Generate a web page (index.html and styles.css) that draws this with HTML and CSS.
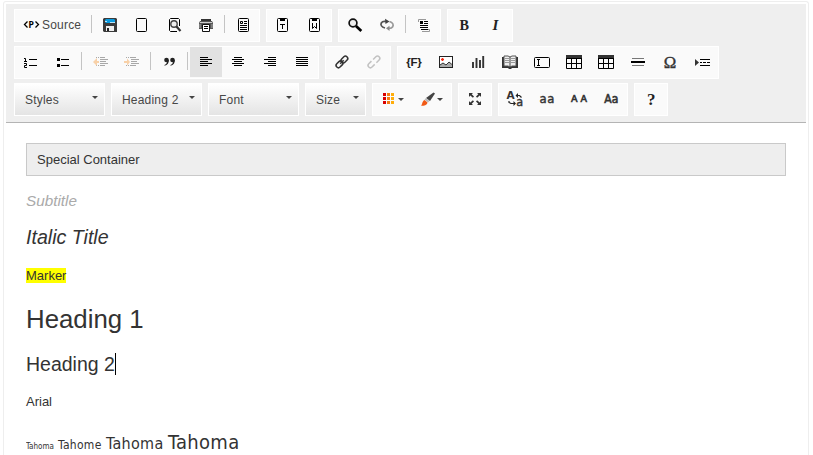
FILE: index.html
```
<!DOCTYPE html>
<html lang="en">
<head>
<meta charset="utf-8">
<title>Editor</title>
<link rel="stylesheet" href="styles.css">
</head>
<body>
<div class="editor">
<div class="toolbar">
<div class="row">
<div class="group">
<button class="btn source"><svg class="src-icon" width="17" height="12"><path class="ln thick" d="M4.500 2.500L1.500 5.500L4.500 8.500M12.500 2.500L15.500 5.500L12.500 8.500"/><text x="5.600" y="9" class="mono" font-size="9">P</text></svg><span>Source</span></button>
<i class="sep"></i>
<button class="btn" aria-label="Save"><svg viewBox="0 0 32 30"><path d="M10 8H22L23 9V22H10L9 21V9Z" fill="#3b3b3b"/><path d="M12 9H20L21 10V12L20 13H12L11 12V10Z" fill="#0a9be0"/><path d="M11 11h2v1h-2zM16 12h5v1h-5z" fill="#b9e4f8"/><path d="M12 16H20V21H12Z" fill="#eee"/><path d="M13 18h2v3h-2z" fill="#222"/></svg></button>
<button class="btn" aria-label="New page"><svg viewBox="0 0 32 30"><rect class="ln" x="10.5" y="8.5" width="10" height="13" rx="1"/></svg></button>
<button class="btn" aria-label="Preview"><svg viewBox="0 0 32 30"><path class="ln" d="M21.500 16V9.500L20.500 8.500H12.500L11.500 9.500V20.500L12.500 21.500H19"/><circle cx="16" cy="14" r="3.200" fill="#eee" stroke="#444" stroke-width="1.400"/><path d="M18.500 16.500L22.500 21" stroke="#333" stroke-width="2.200"/></svg></button>
<button class="btn" aria-label="Print"><svg viewBox="0 0 32 30"><path d="M11 9H21V11H11Z" fill="#333"/><path d="M10 11H22L23 13V19H9V13Z" fill="#555"/><path d="M10 12.500H22" stroke="#ccc"/><path d="M12.500 14.500H19.500V21.500H12.500Z" fill="#fff" stroke="#111"/><path class="ln" d="M14 16.500H18M14 18.500H18"/><path d="M10 14v4M22 14v4" stroke="#aaa"/></svg></button>
<i class="sep"></i>
<button class="btn" aria-label="Templates"><svg viewBox="0 0 32 30"><rect class="ln" x="11.500" y="8.500" width="10" height="13" rx="1"/><path d="M13.500 11.500h2v2h-2z" fill="none" stroke="#000"/><path class="ln" d="M17 11.500H20M17 13.500H20M13 15.500H20M13 17.500H20M13 19.500H20"/></svg></button>
</div>
<div class="group">
<button class="btn" aria-label="Paste as text"><svg viewBox="0 0 32 30"><rect class="ln" x="10.500" y="8.500" width="10" height="13" rx="1"/><path d="M13 8h5v3h-5z"/><path class="ln" d="M13 14.500H18M15.500 14V19"/></svg></button>
<button class="btn" aria-label="Paste from Word"><svg viewBox="0 0 32 30"><rect class="ln" x="10.500" y="8.500" width="10" height="13" rx="1"/><path d="M13 8h5v3h-5z"/><path class="ln" d="M13.500 13V18.500L15.500 16.500L17.500 18.500V13"/></svg></button>
</div>
<div class="group">
<button class="btn" aria-label="Find"><svg viewBox="0 0 32 30"><circle cx="14" cy="13" r="3.900" fill="#eee" stroke="#111" stroke-width="1.700"/><path d="M17 16L22.300 21" stroke="#000" stroke-width="2.700"/></svg></button>
<button class="btn" aria-label="Replace"><svg viewBox="0 0 32 30"><path d="M14 18C10.500 17 9.300 15 10.300 13C11.300 11.200 13.500 11.200 15 11.500" fill="none" stroke="#555" stroke-width="1.700"/><path d="M14 8.700L18.500 11.500L14.500 14Z" fill="#444"/><path d="M18.500 11.500C21.500 12.500 23 14.500 21.700 16.700C21 17.900 19.500 18.400 18 18.400" fill="none" stroke="#999" stroke-width="1.700"/><path d="M18.500 15.800L15 18.300L18.500 21Z" fill="#888"/></svg></button>
<i class="sep"></i>
<button class="btn" aria-label="Select all"><svg viewBox="0 0 32 30"><path d="M10.500 12V9.500H18M20 19.500H21.500V21.500H14" fill="none" stroke="#999"/><path d="M12 11h3v3h-3z"/><path class="ln" d="M16 11.500H20M16 13.500H20M12 15.500H20M12 17.500H20M13 19.500H20"/></svg></button>
</div>
<div class="group">
<button class="btn" aria-label="Bold"><svg viewBox="0 0 32 30"><text x="11.500" y="20" class="serif" font-size="15" textLength="9.500" lengthAdjust="spacingAndGlyphs">B</text></svg></button>
<button class="btn" aria-label="Italic"><svg viewBox="0 0 32 30"><text x="12.500" y="20" class="serif it" font-size="15">I</text></svg></button>
</div>
</div>
<div class="row">
<div class="group">
<button class="btn" aria-label="Numbered list"><svg viewBox="0 0 32 30"><path class="ln" d="M9 11.500H10.500V15M9 14.500H12M9 16.500H11.500V18.500H9.500V20.500H12M14 12.500H22M14 18.500H22"/></svg></button>
<button class="btn" aria-label="Bulleted list"><svg viewBox="0 0 32 30"><path d="M10 11h3v3h-3zM10 17h3v3h-3z"/><path class="ln" d="M14 12.500H22M14 18.500H22"/></svg></button>
<i class="sep"></i>
<button class="btn off" aria-label="Outdent"><svg viewBox="0 0 32 30"><path class="ln" d="M12 10.500h1m1 0h1m1 0h5M16 12.500H24M16 14.500H22M16 16.500H24M12 18.500h1m1 0h1m1 0h5"/><path d="M9 15L13 11V14H15V16H13V19Z" fill="#f57c00"/></svg></button>
<button class="btn off" aria-label="Indent"><svg viewBox="0 0 32 30"><path class="ln" d="M10 10.500h1m1 0h1m1 0h6M15 12.500H23M15 14.500H21M15 16.500H23M10 18.500h1m1 0h1m1 0h6"/><path d="M14 15L11 11.500V14H8V16H11V18.500Z" fill="#f57c00"/></svg></button>
<i class="sep"></i>
<button class="btn" aria-label="Quote"><svg viewBox="0 0 32 30"><g fill="#222"><circle cx="13.500" cy="13" r="2.300"/><path d="M15.800 12.500C16.200 16 14.500 18 11.500 18.800V18C13.500 17 14 16 14 14Z"/><circle cx="19.500" cy="13" r="2.300"/><path d="M21.800 12.500C22.200 16 20.500 18 17.500 18.800V18C19.500 17 20 16 20 14Z"/></g></svg></button>
<i class="sep"></i>
<button class="btn active" aria-label="Align left"><svg viewBox="0 0 32 30"><path class="ln" d="M10 10.500H18M10 12.500H22M10 14.500H18M10 16.500H22M10 18.500H18"/></svg></button>
<button class="btn" aria-label="Center"><svg viewBox="0 0 32 30"><path class="ln" d="M12 10.500H20M10 12.500H22M12 14.500H20M10 16.500H22M12 18.500H20"/></svg></button>
<button class="btn" aria-label="Align right"><svg viewBox="0 0 32 30"><path class="ln" d="M14 10.500H22M10 12.500H22M14 14.500H22M10 16.500H22M14 18.500H22"/></svg></button>
<button class="btn" aria-label="Justify"><svg viewBox="0 0 32 30"><path class="ln" d="M10 10.500H22M10 12.500H22M10 14.500H22M10 16.500H22M10 18.500H22"/></svg></button>
</div>
<div class="group">
<button class="btn" aria-label="Link"><svg viewBox="0 0 32 30"><g class="chain"><rect x="8.800" y="12.600" width="7.500" height="4.600" rx="2.200"/><rect x="15.700" y="12.600" width="7.500" height="4.600" rx="2.200"/><path d="M13.500 14.900H18.500"/></g></svg></button>
<button class="btn" aria-label="Unlink"><svg viewBox="0 0 32 30"><g class="chain pale"><path d="M14.800 12.600H11A2.300 2.300 0 0 0 11 17.200H14.800M17.200 12.600H21A2.300 2.300 0 0 1 21 17.200H17.200"/></g></svg></button>
</div>
<div class="group">
<button class="btn" aria-label="Field"><svg viewBox="0 0 32 30"><text x="8.300" y="18.500" class="sans" font-size="11.500" textLength="15.500">{F}</text></svg></button>
<button class="btn" aria-label="Image"><svg viewBox="0 0 32 30"><rect x="9.500" y="9.500" width="13" height="11" fill="#fff" stroke="#222"/><path d="M10 20V18L13 16L16 18L19 15L22 18V20Z" fill="#aaa"/><path d="M10 18L13 16L16 18L19 15L22 17.500" fill="none" stroke="#333"/><path d="M11 12.500H14M12.500 11V14" stroke="#f32a12" stroke-width="1.300"/></svg></button>
<button class="btn" aria-label="Chart"><svg viewBox="0 0 32 30"><path d="M11 15V21M14.500 11V21M18 13V21M21.200 9V21" stroke="#333" stroke-width="1.900"/></svg></button>
<button class="btn" aria-label="Dictionary"><svg viewBox="0 0 32 30"><path d="M8 10H10V19H22V10H24V21H18L17 22H15L14 21H8Z" fill="#333"/><path d="M10 9H14L16 10L18 9H22V19H18L16 20L14 19H10Z" fill="#eee" stroke="#555"/><path d="M16 10V20" stroke="#444"/><path d="M11 11.500H15M11 13.500H15M11 15.500H15M17 11.500H21M17 13.500H21M17 15.500H21" stroke="#999"/></svg></button>
<button class="btn" aria-label="Text field"><svg viewBox="0 0 32 30"><rect class="ln" x="8.500" y="10.500" width="15" height="10" rx="1"/><path class="ln" d="M11 12.500H14M12.500 12V18M11 18.500H14"/></svg></button>
<button class="btn" aria-label="Table"><svg viewBox="0 0 32 30"><path d="M8 8H24V11H8Z" fill="#333"/><path class="ln" d="M8.500 11V21.500H23.500V11M8 16.500H24M13.500 11V22M18.500 11V22M8 11.500H24"/></svg></button>
<button class="btn" aria-label="Table layout"><svg viewBox="0 0 32 30"><path d="M8 8H24V11H8Z" fill="#333"/><path class="ln" d="M8.500 11V21.500H23.500V11M8 16.500H24M13.500 11V22M18.500 11V22M8 11.500H24"/></svg></button>
<button class="btn" aria-label="Horizontal line"><svg viewBox="0 0 32 30"><path d="M10 11.500H22M10 18.500H22" stroke="#777"/><path d="M9 14H23V16H9Z"/></svg></button>
<button class="btn" aria-label="Symbol"><svg viewBox="0 0 32 30"><text x="9.700" y="21" class="omega" font-size="17" textLength="12.500" lengthAdjust="spacingAndGlyphs">Ω</text></svg></button>
<button class="btn" aria-label="Page break"><svg viewBox="0 0 32 30"><path d="M9 12L13 15.500L9 19Z" fill="#333"/><path class="ln" d="M14 12.500H24M14 18.500H24M14 15.500h2m1 0h3m1 0h3"/></svg></button>
</div>
</div>
<div class="row">
<div class="combo">Styles<i class="caret"></i></div>
<div class="combo">Heading 2<i class="caret"></i></div>
<div class="combo">Font<i class="caret"></i></div>
<div class="combo small">Size<i class="caret"></i></div>
<div class="group">
<button class="btn wide" aria-label="Text color"><svg viewBox="0 0 39 30"><path d="M10 9h3v3h-3zM10 13h3v3h-3zM10 17h3v3h-3z" fill="#d90000"/><path d="M14 9h3v3h-3zM14 13h3v3h-3zM14 17h3v3h-3z" fill="#f57b12"/><path d="M18 9h3v3h-3zM18 13h3v3h-3zM18 17h3v3h-3z" fill="#ffad0a"/><path d="M25 14H31L28 17Z" fill="#444"/></svg></button>
<button class="btn wide" aria-label="Highlight"><svg viewBox="0 0 39 30"><path d="M21.500 8.500L23 9.500L18 17L14 14Z" fill="#444"/><path d="M14 14L17.500 17L16 18.500L12.500 15.500Z" fill="#bbb"/><path d="M12.500 16L15.500 18.500C15 21.500 11 22 9 21.800C10.500 20.500 10 17 12.500 16Z" fill="#f15a16"/><path d="M25 14H31L28 17Z" fill="#444"/></svg></button>
</div>
<div class="group">
<button class="btn" aria-label="Maximize"><svg viewBox="0 0 32 30"><path d="M10 9h4l-1.300 1.300L15 12.600L13.900 13.700L11.300 11.400L10 13zM22 9h-4l1.300 1.300L17 12.600L18.100 13.700L20.700 11.400L22 13zM10 21h4l-1.300-1.300L15 17.400L13.900 16.300L11.300 18.600L10 17zM22 21h-4l1.300-1.300L17 17.400L18.100 16.300L20.700 18.600L22 17z" fill="#333"/></svg></button>
</div>
<div class="group">
<button class="btn" aria-label="Change case"><svg viewBox="0 0 32 30"><text x="7.600" y="15" class="dj" font-size="10.500" textLength="8">A</text><text x="17.300" y="22" class="dj plain" font-size="12.500" textLength="7">a</text><path d="M18 11.500H20.500L22.500 13.500M10 17V18.500L12 19.500H15" fill="none" stroke="#222" stroke-width="1.200"/><path d="M16.500 11.500L19 9V14ZM17 19.500L14.500 17V22Z" fill="#222"/></svg></button>
<button class="btn" aria-label="Lower case"><svg viewBox="0 0 32 30"><text x="8.500" y="18.500" class="dj plain" font-size="13" textLength="15">aa</text></svg></button>
<button class="btn" aria-label="Upper case"><svg viewBox="0 0 32 30"><text x="8" y="18" class="dj upper" font-size="9.500" textLength="16">AA</text></svg></button>
<button class="btn" aria-label="Capitalize"><svg viewBox="0 0 32 30"><text x="9.300" y="18.500" class="dj upper" font-size="11.500" textLength="14" lengthAdjust="spacingAndGlyphs">Aa</text></svg></button>
</div>
<div class="group">
<button class="btn" aria-label="Help"><svg viewBox="0 0 32 30"><text x="12" y="20.500" class="serif" font-size="17">?</text></svg></button>
</div>
</div>
</div>
<div class="content">
<div class="special">Special Container</div>
<h3 class="subtitle">Subtitle</h3>
<h2 class="title">Italic Title</h2>
<p class="para"><span class="marker">Marker</span></p>
<h1 class="h1">Heading 1</h1>
<h2 class="h2">Heading 2<i class="cursor"></i></h2>
<p class="para arial">Arial</p>
<p class="tahoma"><span class="t8">Tahoma</span><span class="t12">Tahome</span><span class="t16">Tahoma</span><span class="t20">Tahoma</span></p>
</div>
</div>
</body>
</html>
```
FILE: styles.css
```
* { box-sizing: border-box; }
html, body { height: 100%; }
body {
  margin: 0;
  padding: 1px 4px 0 3px;
  overflow: hidden;
  background: #fff;
  color: #333;
  font: 13px "Liberation Sans", Arial, sans-serif;
}
.editor {
  width: 806px;
  height: 100%;
  padding: 2px 2px 0;
  border: 1px solid #eee;
  border-bottom: 0;
  border-radius: 3px 3px 0 0;
}
.toolbar {
  display: flex;
  flex-direction: column;
  gap: 4px;
  height: 119px;
  padding: 5px 8px 0;
  background: #efefef;
  border-bottom: 1px solid #b4b4b4;
}
.row { display: flex; gap: 6px; }
.group {
  display: flex;
  height: 33px;
  border: 1px solid #fff;
  background: #fafafa;
}
.btn {
  display: block;
  width: 32px;
  height: 30px;
  margin: 0;
  padding: 0;
  border: 0;
  background: none;
}
.btn svg { display: block; width: 32px; height: 30px; }
.btn.wide, .btn.wide svg { width: 39px; }
.btn.active { background: #e2e2e2; }
.btn.off svg { opacity: .32; }
.btn.source {
  display: flex;
  align-items: center;
  width: 74px;
  padding-left: 8px;
  gap: 2px;
  color: #474747;
  font: 12px/30px "Liberation Sans", Arial, sans-serif;
  letter-spacing: .2px;
}
.btn .src-icon { width: 17px; height: 12px; }
.sep { width: 1px; height: 18px; margin: 5px 2px; background: #c4c4c4; }
.ln { fill: none; stroke: #000; stroke-width: 1; }
.thick { stroke-width: 1.3; }
.chain { fill: none; stroke: #333; stroke-width: 1.5; transform: rotate(-45deg); transform-origin: 16px 15px; }
.chain.pale { stroke: #c2c2c2; }
.mono { font-family: "DejaVu Sans Mono", monospace; font-weight: bold; }
.serif { font-family: "Liberation Serif", serif; font-weight: bold; fill: #222; }
.it { font-style: italic; }
.omega { font-family: "Liberation Serif", serif; fill: #333; stroke: #333; stroke-width: .4; }
.sans { font-family: "Liberation Sans", sans-serif; font-weight: bold; fill: #222; }
.dj { font-family: "DejaVu Sans", sans-serif; font-weight: bold; fill: #333; }
.dj.plain { font-family: "DejaVu Sans Condensed", "DejaVu Sans", sans-serif; font-weight: normal; stroke: #333; stroke-width: .4; }
.dj.upper { font-weight: normal; stroke: #333; stroke-width: .6; }
.combo {
  display: flex;
  justify-content: space-between;
  width: 91px;
  height: 33px;
  padding: 0 6px 0 10px;
  border: 1px solid #fff;
  background: linear-gradient(#fff, #e4e4e4);
  color: #474747;
  font-size: 12px;
  letter-spacing: .2px;
  line-height: 32px;
}
.combo.small { width: 61px; }
.caret {
  width: 6px;
  height: 3px;
  margin-top: 12px;
  background: #444;
  clip-path: polygon(0 0, 100% 0, 50% 100%);
}
.content { height: 332px; padding: 20px 20px 0; overflow: hidden; }
.special {
  height: 33px;
  padding: 5px 10px;
  border: 1px solid #c9c9c9;
  background: #eee;
  line-height: 21px;
}
h1, h2, h3, p { margin: 0; font-weight: normal; }
.subtitle { margin-top: 13px; font-size: 15.3px; line-height: 24px; font-style: italic; color: #aaa; }
.title { margin-top: 9px; font-size: 19.6px; line-height: 30px; font-style: italic; }
.para { margin-top: 13px; line-height: 21px; }
.marker { background: #ff0; }
.h1 { margin-top: 17px; font-size: 25.8px; line-height: 32px; }
.h2 { display: flex; align-items: center; margin-top: 17px; font-size: 19.5px; line-height: 24px; }
.cursor { width: 1px; height: 22px; background: #000; }
.arial { margin-top: 15px; }
.tahoma {
  display: flex;
  align-items: baseline;
  height: 29px;
  margin-top: 14px;
  overflow: hidden;
  font-family: "DejaVu Sans Condensed", "DejaVu Sans", sans-serif;
  font-stretch: condensed;
  line-height: 32px;
}
.t8 { width: 32px; font-size: 8px; }
.t12 { width: 48px; font-size: 12px; letter-spacing: .3px; }
.t16 { width: 62px; font-size: 16px; letter-spacing: .3px; }
.t20 { font-size: 20px; letter-spacing: .3px; }
```
